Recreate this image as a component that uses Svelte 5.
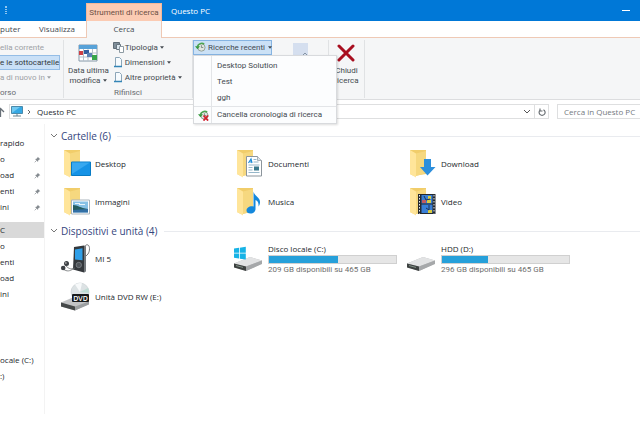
<script lang="ts">
    interface Item {
        name: string;
        icon: string;
        used?: number;
        info?: string;
    }

    const quickAccess = ["o", "oad", "enti", "ini"];
    const thisPc = ["o", "enti", "oad", "ini"];
    const drives = ["ocale (C:)", ":)"];
    const recentSearches = ["Desktop Solution", "Test", "ggh"];
    const refine = [
        { name: "Tipologia", icon: "kind" },
        { name: "Dimensioni", icon: "page" },
        { name: "Altre proprietà", icon: "page" },
    ];

    const groups: { title: string; items: Item[] }[] = [
        {
            title: "Cartelle (6)",
            items: [
                { name: "Desktop", icon: "desktop" },
                { name: "Documenti", icon: "documents" },
                { name: "Download", icon: "download" },
                { name: "Immagini", icon: "pictures" },
                { name: "Musica", icon: "music" },
                { name: "Video", icon: "video" },
            ],
        },
        {
            title: "Dispositivi e unità (4)",
            items: [
                { name: "MI 5", icon: "player" },
                {
                    name: "Disco locale (C:)",
                    icon: "system",
                    used: 54,
                    info: "209 GB disponibili su 465 GB",
                },
                {
                    name: "HDD (D:)",
                    icon: "drive",
                    used: 36,
                    info: "296 GB disponibili su 465 GB",
                },
                { name: "Unità DVD RW (E:)", icon: "dvd" },
            ],
        },
    ];

    let menuOpen = $state(true);
</script>

{#snippet caret()}
    <svg class="caret" viewBox="0 0 5 3" aria-hidden="true"><path d="M0 0h5L2.5 3z" fill="currentColor" /></svg>
{/snippet}

{#snippet chevron()}
    <svg class="chevron" viewBox="0 0 8 6" aria-hidden="true">
        <path d="M1 1l3 3 3-3" fill="none" stroke="currentColor" />
    </svg>
{/snippet}

{#snippet history(clear: boolean)}
    <svg class="history" viewBox="0 0 12 12" aria-hidden="true">
        <circle cx="7" cy="6" r="4" fill="#dfe5df" stroke="#8e9b90" />
        <path d="M7 3.5V6h2" fill="none" stroke="#66736a" stroke-width=".8" />
        <path d="M10 2.2A5 5 0 0 0 2.6 5" fill="none" stroke="#4ba64f" stroke-width="1.7" />
        <path d="M0 4.6h5.4L2.7 8z" fill="#35993d" />
        {#if clear}
            <path d="M6 6l5 5.500M11 6l-5 5.500" stroke="#d31f2c" stroke-width="2" />
        {/if}
    </svg>
{/snippet}

{#snippet pin()}
    <svg class="pin" viewBox="0 0 8 8" aria-hidden="true">
        <path d="M4.200.8L7.200 3.800 6 4 4.800 5.200 4.600 6.800 1.200 3.400 2.800 3.200 4 2z" fill="#858b90" />
        <path d="M3 5L.8 7.200" stroke="#858b90" stroke-width=".8" />
    </svg>
{/snippet}

{#snippet driveBody()}
    <path d="M1 20.500L17 14l12 3.500v3L13 28 1 24z" fill="#b9babb" />
    <path d="M1 20.500L17 14l12 3.500L13 23.500z" fill="#e2e3e4" />
    <path d="M1 20.500l12 3V28L1 24.500z" fill="#3d4140" />
    <path d="M3 22.600l7 1.800" stroke="#819087" stroke-width="1" />
    <path d="M13 23.500l16-6v3.500L13 28z" fill="#a6a8aa" />
{/snippet}

{#snippet itemIcon(kind: string)}
    <svg class="item-icon" viewBox="0 0 32 32" aria-hidden="true">
        {#if kind === "system" || kind === "drive"}
            {@render driveBody()}
            {#if kind === "system"}
                <path d="M1 5.600l5-.8v5H1zM6.800 4.700l6-.9v6h-6zM1 10.600h5v5l-5-.8zM6.800 10.600h6v6l-6-.9z" fill="#17b3e6" />
            {/if}
        {:else if kind === "dvd"}
            <circle cx="20" cy="11" r="9" fill="#dce2e4" stroke="#c5cbce" stroke-width=".6" />
            <path d="M20 11L15 3.500a9 9 0 0 1 7-1.300z" fill="#f7f9fa" />
            <path d="M20 11l8-4a9 9 0 0 1 1 5z" fill="#bfdcd4" />
            <path d="M1 21.500L14 16l15 4v3L15 29.500 1 25.500z" fill="#c2c3c5" />
            <path d="M1 21.500l14 4v4L1 25.500z" fill="#454849" />
            <path d="M15 25.500l14-5v3l-14 6z" fill="#9c9fa1" />
            <rect x="12" y="13" width="17" height="8" rx="1" fill="#17191b" />
            <text x="20.500" y="19.500" text-anchor="middle" class="disc-text">DVD</text>
        {:else if kind === "player"}
            <path d="M24 9c0-6 2-8 4-7s2 6 0 9l-3 3" fill="none" stroke="#66696c" stroke-width=".9" />
            <path d="M14 4l10-1.500 2 1.500v24l-2 1.500-11-3z" fill="#34383c" />
            <path d="M24 2.500l2 1.500v24l-2 1.500z" fill="#74797d" />
            <path d="M15 6.500l7.500-1.300v12l-7.500-.7z" fill="#2f9fe8" />
            <circle cx="18.800" cy="22" r="2.700" fill="#50555a" stroke="#858b90" stroke-width=".7" />
            <path d="M5 22c3 3 5 5 10 3M3 26c4 3 7 2 10 0" fill="none" stroke="#696d70" stroke-width=".8" />
            <circle cx="6.500" cy="20.500" r="2.500" fill="#3c4044" />
            <circle cx="3.200" cy="25" r="2.300" fill="#3c4044" />
            <circle cx="5.800" cy="20" r="1" fill="#999" />
        {:else}
            <path d="M4 2h16v24l-12 2-4-2z" fill="#f1cd6a" />
            <path d="M4 2l6 3.500v24L4 26z" fill="#ffe59a" />
            <path d="M10 5.500L20 3v22l-10 3z" fill="#f6d87f" />
            {#if kind === "desktop"}
                <path d="M11.500 14h19v13.500h-19z" fill="#1693e6" stroke="#087bc4" />
                <path d="M12 14.500h18L12 26z" fill="#37a8f0" />
            {:else if kind === "documents"}
                <path d="M13.500 8.500h11l4 4v15.500h-15z" fill="#fff" stroke="#8c959c" />
                <path d="M24.500 8.500v4h4" fill="#dde5e9" stroke="#8c959c" stroke-width=".7" />
                <path d="M15.500 15l2.500-4 1 4m-2-1h2" fill="none" stroke="#1c8bd6" stroke-width="1.200" />
                <path d="M20.500 11.500h3M20.500 14h5M15.500 17h11M15.500 19.500h4M15.500 22h4M15.500 24.500h11" stroke="#7ba5bd" stroke-width=".8" />
                <rect x="21" y="18.500" width="5" height="4" fill="#3b798c" />
            {:else if kind === "download"}
                <path d="M18 11h7v8h4.500L21.500 27.500 14 19h4z" fill="#2d8fdc" />
            {:else if kind === "pictures"}
                <path d="M11.500 14h18v14h-18z" fill="#fff" stroke="#aab5bc" />
                <path d="M13 15.500h15v11H13z" fill="#87c1e5" />
                <path d="M13 19c5 0 7 3 15 4v1.500H13z" fill="#255e60" />
                <path d="M13 24l15-1v3.500H13z" fill="#326fa5" />
                <path d="M15 17.500h5M19 18.500h6" stroke="#eaf5fa" stroke-width="1" />
            {:else if kind === "music"}
                <path d="M20.500 5.500c1 5 7 6 6.500 11-.1 2-1 3.500-1.500 4 .5-5-2-6-3-6.500V23c0 2.500-2 4.500-5 4.500-2.500 0-4-1.300-4-3 0-2.800 3.500-5 7-4z" fill="#1488dc" />
            {:else if kind === "video"}
                <path d="M12 8h17.500v20H12z" fill="#24292f" />
                <path d="M13.500 9v18.500M28 9v18.500" stroke="#e8ecee" stroke-dasharray="1.500 1.500" />
                <path d="M15.500 9h11v8.500h-11zM15.500 18.500h11V27h-11z" fill="#397fd7" />
                <path d="M16 14h4v3h-4z" fill="#c35a60" />
                <path d="M22 10h3v3h-3zM21 14h4v3h-4zM22 24h4v3h-4z" fill="#d9cc42" />
                <path d="M18 10l2 4 4-1M23 19v5l-3-2" fill="none" stroke="#213553" />
            {/if}
        {/if}
    </svg>
{/snippet}

<div class="window">
    <header class="titlebar">
        <span class="grip"></span>
        <span class="tool-title">Strumenti di ricerca</span>
        <h1>Questo PC</h1>
        <button class="minimize" aria-label="Riduci a icona"></button>
    </header>

    <nav class="tabs">
        <a href="#computer" class="tab first">puter</a>
        <a href="#view" class="tab">Visualizza</a>
        <a href="#search" class="tab active">Cerca</a>
    </nav>

    <section class="ribbon">
        <div class="group location">
            <div class="stack">
                <button class="command muted">ella corrente</button>
                <button class="command selected">e le sottocartelle</button>
                <button class="command muted">a di nuovo in {@render caret()}</button>
            </div>
            <span class="caption">orso</span>
        </div>

        <div class="group refine">
            <div class="group-body">
                <button class="large">
                    <svg class="calendar" viewBox="0 0 20 18" aria-hidden="true">
                        <path d="M1 1h18v16H1z" fill="#fff" stroke="#8497a8" />
                        <path d="M1 1h18v4H1z" fill="#58a2d8" />
                        <path d="M1 9h18M1 13h18M5.500 5v12M10 5v12M14.500 5v12" stroke="#b7c1c9" />
                        <path d="M1 7h4v4H1z" fill="#cd3e43" />
                        <path d="M6 6h5v4H6z" fill="#355e9e" />
                        <path d="M9 9h5v4H9z" fill="#5d82b3" />
                        <path d="M14 11h5v5h-5z" fill="#38a64b" />
                    </svg>
                    <span>Data ultima<br />modifica {@render caret()}</span>
                </button>
                <div class="stack">
                    {#each refine as option}
                        <button class="command">
                            <svg class="small-icon" viewBox="0 0 11 11" aria-hidden="true">
                                {#if option.icon === "kind"}
                                    <path d="M.5.500h6v6h-6z" fill="#7f8e99" stroke="#5f6c76" />
                                    <path d="M3.500 2.500h4v5h-4z" fill="#dbe6ee" stroke="#66747f" />
                                    <path d="M6.500 4.500h4v6h-4z" fill="#fff" stroke="#8d9aa3" />
                                {:else}
                                    <path d="M2.500.500h4l2 2v7h-6z" fill="#f7fbfe" stroke="#8da6b8" />
                                    <path d="M1 9.500h8" stroke="#3385b7" stroke-width="1.500" />
                                {/if}
                            </svg>
                            {option.name}
                            {@render caret()}
                        </button>
                    {/each}
                </div>
            </div>
            <span class="caption">Rifinisci</span>
        </div>

        <div class="group options">
            <div class="recent">
                <button class="recent-button" aria-expanded={menuOpen} onclick={() => (menuOpen = !menuOpen)}>
                    {@render history(false)}
                    Ricerche recenti
                    {@render caret()}
                </button>
                {#if menuOpen}
                    <div class="menu" role="menu">
                        {#each recentSearches as search}
                            <button role="menuitem">{search}</button>
                        {/each}
                        <button role="menuitem" class="clear">
                            <span class="menu-icon">{@render history(true)}</span>
                            Cancella cronologia di ricerca
                        </button>
                    </div>
                {/if}
            </div>
            <svg class="save" viewBox="0 0 15 15" aria-hidden="true">
                <path d="M0 0h15v15H0z" fill="#d5dfef" />
                <path d="M10 12l2-2 2 2" fill="none" stroke="#8795a5" />
            </svg>
        </div>

        <div class="group close">
            <button class="large">
                <svg class="cross" viewBox="0 0 18 18" aria-hidden="true">
                    <path d="M2 2l14 14M16 2L2 16" stroke="#a80f20" stroke-width="3" stroke-linecap="round" />
                </svg>
                <span>Chiudi<br />ricerca</span>
            </button>
        </div>
    </section>

    <div class="address-row">
        <button class="up" aria-label="Su">
            <svg viewBox="0 0 5 10" aria-hidden="true"><path d="M0 1l4 4M.500 1v9" fill="none" stroke="#687078" stroke-width="1.300" /></svg>
        </button>
        <div class="address">
            <svg class="pc" viewBox="0 0 12 11" aria-hidden="true">
                <path d="M.5.500h11v7H.5z" fill="#35a9e5" stroke="#4b8aaa" />
                <path d="M1 1h8L1 7z" fill="#72caf2" />
                <path d="M6 8v2M2 10h8" stroke="#64818f" />
            </svg>
            <svg class="crumb" viewBox="0 0 4 6" aria-hidden="true"><path d="M1 1l2 2-2 2" fill="none" stroke="#666" /></svg>
            <span>Questo PC</span>
            <button class="history-toggle" aria-label="Percorsi precedenti">{@render chevron()}</button>
            <button class="refresh" aria-label="Aggiorna">
                <svg viewBox="0 0 8 8" aria-hidden="true">
                    <path d="M5.500 1.700A3 3 0 1 1 2 2.200M2 .500v2.500h2.500" fill="none" stroke="#60666b" stroke-width="1.100" />
                </svg>
            </button>
        </div>
        <input class="search" type="search" aria-label="Cerca in Questo PC" placeholder="Cerca in Questo PC" />
    </div>

    <div class="body">
        <nav class="sidebar">
            <a href="#quick">rapido</a>
            {#each quickAccess as entry}
                <a href="#quick">{entry}{@render pin()}</a>
            {/each}
            <a href="#pc" class="current">C</a>
            {#each thisPc as entry}
                <a href="#pc">{entry}</a>
            {/each}
            <div class="drives">
                {#each drives as entry}
                    <a href="#drive">{entry}</a>
                {/each}
            </div>
        </nav>

        <main>
            {#each groups as group}
                <section>
                    <h2>{@render chevron()}{group.title}</h2>
                    <div class="items">
                        {#each group.items as item}
                            <div class="item">
                                {@render itemIcon(item.icon)}
                                <div class="details">
                                    <span>{item.name}</span>
                                    {#if item.info}
                                        <div class="bar"><div class="used" style:width="{item.used}%"></div></div>
                                        <span class="info">{item.info}</span>
                                    {/if}
                                </div>
                            </div>
                        {/each}
                    </div>
                </section>
            {/each}
        </main>
    </div>
</div>

<style>
    :global(body) {
        margin: 0;
        background: #fff;
    }

    .window {
        min-height: 100vh;
        overflow: hidden;
        background: #fff;
        color: #24282d;
        font-family: "Open Sans", "Noto Sans", sans-serif;
        font-size: 8px;
        line-height: 10px;
    }

    .window * {
        box-sizing: border-box;
    }

    button,
    input {
        margin: 0;
        padding: 0;
        border: 0;
        background: none;
        color: inherit;
        font: inherit;
    }

    a {
        color: inherit;
        text-decoration: none;
    }

    svg {
        flex: none;
    }

    .caret {
        width: 4px;
        height: 3px;
        margin-left: 1px;
        vertical-align: middle;
    }

    .chevron {
        width: 8px;
        height: 6px;
    }

    .titlebar {
        display: flex;
        height: 21px;
        background: #0078d7;
        color: #fff;
    }

    .grip {
        width: 2px;
        height: 8px;
        margin: 6px 79px 0 5px;
        border-left: 1px dotted #8fc6f0;
        border-right: 1px dotted #8fc6f0;
    }

    .tool-title {
        width: 76px;
        margin-top: 3px;
        border: 1px solid #f3b899;
        border-bottom: 0;
        background: #fbcbb3;
        color: #6b4f45;
        line-height: 18px;
        text-align: center;
        white-space: nowrap;
    }

    .tool-title,
    .ribbon,
    .info {
        font-family: Roboto, "Noto Sans", sans-serif;
    }

    h1 {
        margin: 0 auto 0 9px;
        font-size: 8px;
        font-weight: 400;
        line-height: 21px;
    }

    .minimize {
        width: 8px;
        height: 1px;
        margin: 10px 10px 0 0;
        background: #fff;
    }

    .tabs {
        display: flex;
        height: 17px;
        border-bottom: 1px solid #efc9b5;
        color: #444a50;
        line-height: 16px;
    }

    .tab {
        width: 58px;
        text-align: center;
    }

    .tab.first {
        width: 28px;
        text-align: left;
    }

    .tab.active {
        width: 76px;
        height: 17px;
        border: 1px solid #efc9b5;
        border-width: 0 1px;
        background: #f5f6f7;
    }

    .ribbon {
        display: flex;
        height: 62px;
        border-bottom: 1px solid #dcdddf;
        background: #f5f6f7;
        color: #444a50;
    }

    .group {
        display: flex;
        flex-direction: column;
        justify-content: space-between;
        margin: 2px 0 1px;
        border-right: 1px solid #e0e2e4;
    }

    .location {
        width: 64px;
    }

    .refine {
        width: 129px;
    }

    .options {
        flex-direction: row;
        justify-content: flex-start;
        width: 136px;
    }

    .close {
        width: 36px;
        align-items: center;
    }

    .group-body {
        display: flex;
        gap: 4px;
        padding-left: 4px;
    }

    .stack {
        display: flex;
        flex-direction: column;
    }

    .command {
        display: flex;
        align-items: center;
        gap: 1px;
        height: 15px;
        white-space: nowrap;
    }

    .muted {
        color: #9da1a5;
    }

    .selected {
        width: 60px;
        border: 1px solid #94bde6;
        border-left: 0;
        background: #c9e0f7;
        color: #343a40;
    }

    .caption {
        color: #676b70;
        text-align: center;
    }

    .location .caption {
        text-align: left;
    }

    .large {
        display: flex;
        flex-direction: column;
        align-items: center;
        gap: 4px;
        padding-top: 4px;
        white-space: nowrap;
    }

    .calendar {
        width: 20px;
        height: 18px;
    }

    .cross {
        width: 18px;
        height: 18px;
    }

    .small-icon {
        width: 11px;
        height: 11px;
    }

    .recent {
        position: relative;
        height: 15px;
    }

    .recent-button {
        display: flex;
        align-items: center;
        gap: 2px;
        width: 79px;
        height: 15px;
        padding-left: 1px;
        border: 1px solid #86b4e2;
        background: #cbe1f6;
        white-space: nowrap;
    }

    .history {
        width: 11px;
        height: 11px;
    }

    .menu {
        position: absolute;
        z-index: 2;
        top: 15px;
        left: 0;
        width: 144px;
        padding-top: 2px;
        border: 1px solid #d8dadd;
        background: linear-gradient(90deg, transparent 17px, #e3e5e8 17px, #e3e5e8 18px, transparent 18px), #fcfdfe;
        box-shadow: 1px 1px 2px #0002;
    }

    .menu button {
        display: block;
        width: 100%;
        height: 16px;
        padding-left: 23px;
        text-align: left;
    }

    .menu .clear {
        display: flex;
        align-items: center;
        height: 17px;
        padding-left: 4px;
        border-top: 1px solid #e3e5e8;
        white-space: nowrap;
    }

    .menu-icon {
        display: flex;
        width: 19px;
    }

    .save {
        width: 15px;
        height: 15px;
        margin: 3px 0 0 21px;
    }

    .address-row {
        display: flex;
        height: 24px;
        padding-top: 4px;
    }

    .up {
        display: flex;
        align-items: center;
        width: 9px;
        height: 15px;
    }

    .up svg {
        width: 5px;
        height: 10px;
    }

    .address {
        display: flex;
        flex: 1;
        align-items: center;
        height: 15px;
        padding-left: 1px;
        border: 1px solid #dedfe0;
    }

    .pc {
        width: 12px;
        height: 11px;
    }

    .crumb {
        width: 4px;
        height: 6px;
        margin: 0 6px 0 4px;
    }

    .history-toggle {
        display: flex;
        margin: 0 3px 0 auto;
        color: #555;
    }

    .refresh {
        display: grid;
        place-items: center;
        width: 14px;
        height: 13px;
        border-left: 1px solid #dedfe0;
    }

    .refresh svg {
        width: 8px;
        height: 8px;
    }

    .search {
        width: 83px;
        height: 15px;
        margin-left: 8px;
        padding-left: 6px;
        border: 1px solid #dedfe0;
        border-right: 0;
        appearance: none;
    }

    .search::-webkit-search-cancel-button {
        display: none;
    }

    .search::placeholder {
        color: #747a80;
        opacity: 1;
    }

    .body {
        display: flex;
    }

    .sidebar {
        width: 45px;
        min-height: 290px;
        padding-top: 11px;
        border-right: 1px solid #f3f3f3;
    }

    .sidebar a {
        display: flex;
        align-items: center;
        justify-content: space-between;
        height: 16px;
        padding-right: 3px;
        white-space: nowrap;
    }

    .pin {
        width: 7px;
        height: 7px;
    }

    .sidebar .current {
        width: 44px;
        margin-top: 7px;
        background: #d9d9d9;
    }

    .drives {
        margin-top: 50px;
    }

    main {
        flex: 1;
        padding: 5px 0 0 5px;
    }

    h2 {
        display: flex;
        align-items: center;
        gap: 3px;
        height: 14px;
        margin: 0;
        color: #34457d;
        font-size: 10px;
        font-weight: 400;
        white-space: nowrap;
    }

    h2::after {
        content: "";
        flex: 1;
        height: 1px;
        margin-left: 3px;
        background: #e9ebef;
    }

    h2 .chevron {
        color: #777;
    }

    .items {
        display: grid;
        grid-template-columns: repeat(3, 173px);
        grid-auto-rows: 38px;
        margin-bottom: 3px;
        padding: 2px 0 0 10px;
    }

    .item {
        display: flex;
        align-items: center;
        gap: 3px;
    }

    .item-icon {
        width: 32px;
        height: 32px;
    }

    .details {
        white-space: nowrap;
    }

    .details > span {
        display: block;
    }

    .bar {
        width: 129px;
        height: 9px;
        margin: 1px 0;
        border: 1px solid #d0d0d0;
        background: #e6e6e6;
    }

    .used {
        height: 100%;
        background: #26a0da;
    }

    .info {
        color: #6d6d6d;
    }

    .disc-text {
        fill: #fff;
        font-size: 7px;
        font-weight: 600;
    }
</style>
